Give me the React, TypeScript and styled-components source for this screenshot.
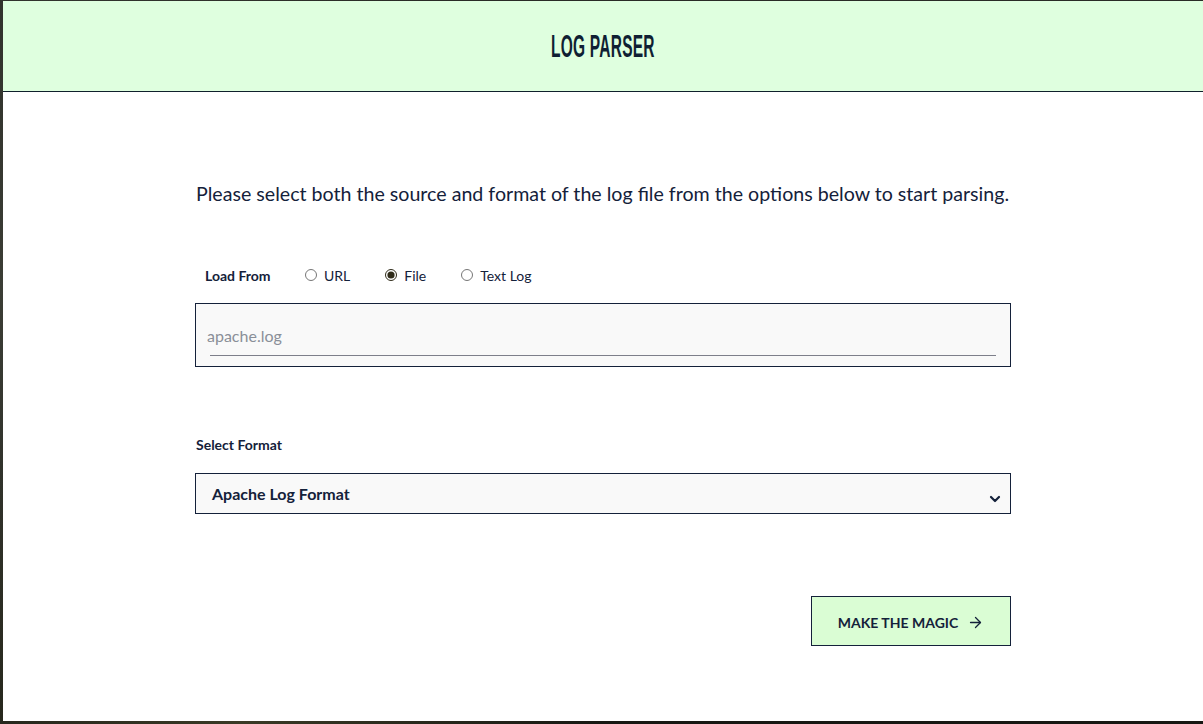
import React, { useState } from "react";
import styled, { createGlobalStyle } from "styled-components";

const GlobalStyle = createGlobalStyle`
  html, body { margin: 0; padding: 0; }
  body {
    font-family: Lato, "Noto Sans", sans-serif;
    color: #14213a;
    background: #1c1d18;
  }
  * { box-sizing: border-box; }
`;

const Backdrop = styled.div`
  width: 1203px;
  height: 724px;
  padding: 1px 0 3px 3px;
  background:
    radial-gradient(circle at 20% 100%, #3a3a26 0%, transparent 30%),
    radial-gradient(circle at 0% 40%, #3b3d35 0%, transparent 40%),
    linear-gradient(180deg, #2a2c27 0%, #171813 100%);
  overflow: hidden;
`;

const Card = styled.div`
  background: #ffffff;
  height: 720px;
  display: flex;
  flex-direction: column;
`;

const Header = styled.header`
  height: 91px;
  flex: none;
  background: #dfffdf;
  border-bottom: 1px solid #10202c;
  display: flex;
  align-items: center;
  justify-content: center;
`;

const Title = styled.h1`
  margin: 0;
  font-family: "Liberation Sans", Arial, sans-serif;
  font-weight: 700;
  font-size: 31px;
  line-height: 1;
  color: #0f1f33;
  transform: scaleX(0.5);
  letter-spacing: 0.5px;
  padding-top: 1px;
`;

const Main = styled.main`
  width: 816px;
  margin: 0 auto;
  padding-top: 90px;
  display: flex;
  flex-direction: column;
`;

const Intro = styled.p`
  margin: 0;
  font-size: 19.62px;
  line-height: 24px;
  padding-left: 1px;
  color: #14213a;
  white-space: nowrap;
`;

const LoadRow = styled.div`
  margin-top: 59px;
  height: 20px;
  display: flex;
  align-items: center;
  padding-left: 10px;
  gap: 35px;
`;

const FieldLabel = styled.span`
  font-size: 14px;
  font-weight: 700;
  color: #14213a;
  white-space: nowrap;
`;

const LoadLabel = styled(FieldLabel)`
  flex: none;
  width: 65px;
`;

const Option = styled.label`
  display: flex;
  align-items: center;
  gap: 7px;
  font-size: 14px;
  color: #14213a;
  white-space: nowrap;
  cursor: pointer;
`;

const Radio = styled.input.attrs({ type: "radio" })`
  margin: 0;
  width: 12px;
  height: 12px;
  accent-color: #2f2b19;
`;

const InputBox = styled.div`
  margin-top: 18px;
  height: 64px;
  border: 1px solid #14213a;
  background: #f9f9f9;
  padding: 0 14px 10px 11px;
  display: flex;
  flex-direction: column;
  justify-content: flex-end;
`;

const TextInput = styled.input`
  width: 100%;
  border: none;
  background: transparent;
  font-family: Lato, sans-serif;
  font-size: 16px;
  line-height: 20px;
  color: #14213a;
  padding: 0;
  margin: 0 0 9px 0;
  outline: none;
  &::placeholder {
    color: #8a8f98;
  }
`;

const Underline = styled.div`
  height: 1px;
  margin-left: 3px;
  background: #7d7f8a;
`;

const FormatLabel = styled(FieldLabel)`
  margin-top: 70px;
  line-height: 16px;
  padding-left: 1px;
`;

const SelectBox = styled.div`
  margin-top: 20px;
  height: 41px;
  border: 1px solid #14213a;
  background: #f9f9f9;
  display: flex;
  align-items: center;
  justify-content: space-between;
  padding: 0 9px 0 16px;
`;

const SelectText = styled.span`
  font-size: 16px;
  font-weight: 700;
  color: #14213a;
`;

const Chevron = styled.svg`
  width: 12px;
  height: 12px;
  margin-top: 10px;
`;

const ButtonRow = styled.div`
  margin-top: 82px;
  display: flex;
  justify-content: flex-end;
`;

const MagicButton = styled.button`
  width: 200px;
  height: 50px;
  background: #dafdd4;
  border: 1px solid #14213a;
  font-family: Lato, sans-serif;
  font-weight: 700;
  font-size: 14px;
  color: #14213a;
  display: flex;
  align-items: center;
  justify-content: center;
  gap: 9px;
  padding: 2px 0 0 0;
  cursor: pointer;
`;

export default function App() {
  const [source, setSource] = useState("file");
  return (
    <>
      <GlobalStyle />
      <Backdrop>
        <Card>
          <Header>
            <Title>LOG PARSER</Title>
          </Header>
          <Main>
            <Intro>
              Please select both the source and format of the log file from the options below to start parsing.
            </Intro>
            <LoadRow>
              <LoadLabel>Load From</LoadLabel>
              <Option>
                <Radio name="src" checked={source === "url"} onChange={() => setSource("url")} />
                URL
              </Option>
              <Option>
                <Radio name="src" checked={source === "file"} onChange={() => setSource("file")} />
                File
              </Option>
              <Option>
                <Radio name="src" checked={source === "text"} onChange={() => setSource("text")} />
                Text Log
              </Option>
            </LoadRow>
            <InputBox>
              <TextInput placeholder="apache.log" />
              <Underline />
            </InputBox>
            <FormatLabel>Select Format</FormatLabel>
            <SelectBox>
              <SelectText>Apache Log Format</SelectText>
              <Chevron viewBox="0 0 12 12" fill="none">
                <path d="M2 4l4 4 4-4" stroke="#14213a" strokeWidth="2.2" strokeLinecap="round" strokeLinejoin="round" />
              </Chevron>
            </SelectBox>
            <ButtonRow>
              <MagicButton>
                MAKE THE MAGIC
                <svg width="17" height="17" viewBox="0 0 24 24" fill="none" stroke="#14213a" strokeWidth="1.8" strokeLinecap="round" strokeLinejoin="round">
                  <path d="M5 12h14" />
                  <path d="m12 5 7 7-7 7" />
                </svg>
              </MagicButton>
            </ButtonRow>
          </Main>
        </Card>
      </Backdrop>
    </>
  );
}
